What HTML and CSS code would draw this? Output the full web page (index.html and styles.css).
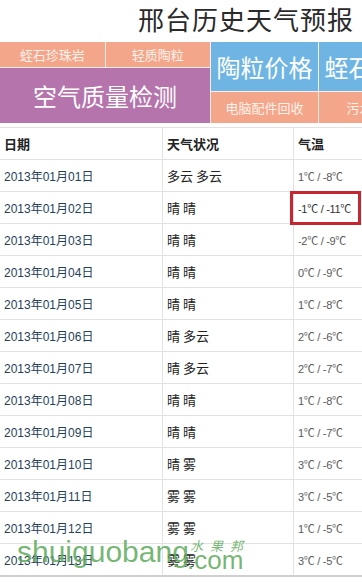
FILE: index.html
```html
<!DOCTYPE html>
<html lang="zh">
<head>
<meta charset="utf-8">
<title>邢台历史天气预报</title>
<link rel="stylesheet" href="styles.css">
</head>
<body>
<div class="page">
  <h1 class="title">邢台历史天气预报</h1>
  <div class="banner">
    <div class="group-left">
      <div class="row-small">
        <div class="cell salmon small">蛭石珍珠岩</div>
        <div class="cell salmon small">轻质陶粒</div>
      </div>
      <div class="cell purple big">空气质量检测</div>
    </div>
    <div class="group-col">
      <div class="cell blue big tall">陶粒价格</div>
      <div class="cell salmon small low">电脑配件回收</div>
    </div>
    <div class="group-col">
      <div class="cell blue big tall">蛭石价格</div>
      <div class="cell salmon small low">污水处理</div>
    </div>
  </div>
  <table class="weather">
    <thead>
      <tr><th class="c1">日期</th><th class="c2">天气状况</th><th class="c3">气温</th></tr>
    </thead>
    <tbody>
      <tr><td class="date">2013年01月01日</td><td class="wx">多云 多云</td><td class="temp">1℃ / -8℃</td></tr>
      <tr><td class="date">2013年01月02日</td><td class="wx">晴 晴</td><td class="temp mark">-1℃ / -11℃</td></tr>
      <tr><td class="date">2013年01月03日</td><td class="wx">晴 晴</td><td class="temp">-2℃ / -9℃</td></tr>
      <tr><td class="date">2013年01月04日</td><td class="wx">晴 晴</td><td class="temp">0℃ / -9℃</td></tr>
      <tr><td class="date">2013年01月05日</td><td class="wx">晴 晴</td><td class="temp">1℃ / -8℃</td></tr>
      <tr><td class="date">2013年01月06日</td><td class="wx">晴 多云</td><td class="temp">2℃ / -6℃</td></tr>
      <tr><td class="date">2013年01月07日</td><td class="wx">晴 多云</td><td class="temp">2℃ / -7℃</td></tr>
      <tr><td class="date">2013年01月08日</td><td class="wx">晴 晴</td><td class="temp">1℃ / -8℃</td></tr>
      <tr><td class="date">2013年01月09日</td><td class="wx">晴 晴</td><td class="temp">1℃ / -7℃</td></tr>
      <tr><td class="date">2013年01月10日</td><td class="wx">晴 雾</td><td class="temp">3℃ / -6℃</td></tr>
      <tr><td class="date">2013年01月11日</td><td class="wx">雾 雾</td><td class="temp">3℃ / -5℃</td></tr>
      <tr><td class="date">2013年01月12日</td><td class="wx">雾 雾</td><td class="temp">1℃ / -5℃</td></tr>
      <tr><td class="date">2013年01月13日</td><td class="wx">雾 雾</td><td class="temp">3℃ / -5℃</td></tr>
    </tbody>
  </table>
  <div class="watermark">
    <span class="wm-main">shuiguobang</span>
    <span class="wm-cn">水果邦</span>
    <span class="wm-com">.com</span>
  </div>
</div>
</body>
</html>
```
FILE: styles.css
```css
html, body {
  margin: 0;
  padding: 0;
  background: #fff;
  overflow: hidden;
}
.page {
  position: relative;
  width: 362px;
  height: 585px;
  overflow: hidden;
  font-family: "Liberation Sans", "Noto Sans CJK SC", sans-serif;
}
.title {
  margin: 0;
  height: 42px;
  box-sizing: border-box;
  padding: 3px 8px 0 0;
  text-align: right;
  font-family: "Noto Sans CJK SC", sans-serif;
  font-weight: 400;
  font-size: 26px;
  letter-spacing: 1px;
  line-height: 32px;
  color: #2a2a2a;
}
.banner {
  display: flex;
  gap: 1px;
  height: 81px;
  width: 440px;
  background: #fbeee9;
}
.group-left {
  display: flex;
  flex-direction: column;
  gap: 1px;
  width: 210px;
  flex: none;
}
.row-small {
  display: flex;
  gap: 1px;
  height: 25px;
}
.row-small .cell { flex: 1; }
.group-col {
  display: flex;
  flex-direction: column;
  gap: 1px;
  width: 107px;
  flex: none;
}
.cell {
  display: flex;
  align-items: center;
  justify-content: center;
  color: #fff;
  font-family: "Noto Sans CJK SC", sans-serif;
  white-space: nowrap;
  overflow: hidden;
}
.salmon { background: #f4a68b; }
.purple { background: #b574ab; flex: 1; }
.blue { background: #6eb5e4; }
.small { font-size: 13px; color: #fdf1ea; }
.big { font-size: 24px; }
.tall { height: 49px; }
.low { flex: 1; }
.weather {
  margin-top: 4px;
  width: 380px;
  border-collapse: collapse;
  border-top: 1px solid #e2e2e2;
  border-bottom: 2px solid #cfcfcf;
}
.weather th, .weather td {
  height: 31px;
  padding: 0 0 0 4px;
  text-align: left;
  border-bottom: 1px solid #e2e2e2;
  border-left: 1px solid #e2e2e2;
  white-space: nowrap;
}
.weather th:first-child, .weather td:first-child { border-left: none; }
.c1 { width: 158px; }
.c2 { width: 126px; }
.weather th {
  font-family: "Noto Sans CJK SC", sans-serif;
  font-weight: 700;
  font-size: 13px;
  color: #222;
}
.date {
  font-size: 12px;
  color: #243f5a;
}
.wx {
  font-family: "Noto Sans CJK SC", sans-serif;
  font-size: 13px;
  color: #222;
}
.temp {
  font-family: "Liberation Sans", "Noto Sans CJK SC", sans-serif;
  font-size: 11px;
  letter-spacing: -0.3px;
  color: #595959;
}
.mark { position: relative; color: #333; }
.mark::after {
  content: "";
  position: absolute;
  left: -4px;
  top: -1px;
  width: 71px;
  height: 34px;
  box-sizing: border-box;
  border: 3px solid #c72530;
}
.watermark {
  position: absolute;
  left: 0;
  top: 520px;
  width: 260px;
  height: 60px;
  pointer-events: none;
}
.wm-main {
  position: absolute;
  left: 17px;
  top: 17px;
  font-family: "Liberation Sans", sans-serif;
  font-size: 30px;
  line-height: 30px;
  color: rgba(92, 170, 90, 0.85);
}
.wm-cn {
  position: absolute;
  left: 190px;
  top: 19px;
  font-family: "Noto Sans CJK SC", sans-serif;
  font-size: 13px;
  font-style: italic;
  line-height: 13px;
  letter-spacing: 7px;
  color: rgba(92, 170, 90, 0.85);
}
.wm-com {
  position: absolute;
  left: 187px;
  top: 27px;
  font-family: "Liberation Sans", sans-serif;
  font-size: 26px;
  line-height: 26px;
  color: rgba(92, 170, 90, 0.85);
}
```
